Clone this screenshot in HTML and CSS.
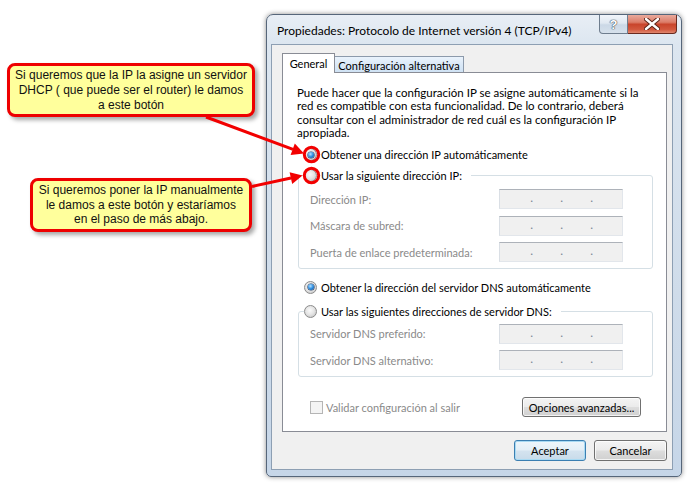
FILE: index.html
```html
<!DOCTYPE html>
<html lang="es">
<head>
<meta charset="utf-8">
<title>Propiedades: Protocolo de Internet versión 4 (TCP/IPv4)</title>
<link rel="stylesheet" href="styles.css">
</head>
<body>
<div class="desk">
  <div class="dialog">
    <div class="titlebar">
      <span class="title">Propiedades: Protocolo de Internet versión 4 (TCP/IPv4)</span>
      <div class="caps">
        <span class="cap help">?</span>
        <span class="cap close"><svg width="16" height="12" viewBox="0 0 16 12"><path d="M2 1 L14 11 M14 1 L2 11" stroke="#5a2418" stroke-width="4.4" stroke-linecap="round"/><path d="M2 1 L14 11 M14 1 L2 11" stroke="#ffffff" stroke-width="2.4" stroke-linecap="round"/></svg></span>
      </div>
    </div>
    <div class="client">
      <div class="tabs">
        <span class="tab active">General</span>
        <span class="tab">Configuración alternativa</span>
      </div>
      <div class="panel">
        <p class="intro">Puede hacer que la configuración IP se asigne automáticamente si la<br>red es compatible con esta funcionalidad. De lo contrario, deberá<br>consultar con el administrador de red cuál es la configuración IP<br>apropiada.</p>
        <label class="opt r1"><span class="rb on"></span>Obtener una dirección IP automáticamente</label>
        <fieldset class="group g1">
          <legend><span class="opt"><span class="rb"></span>Usar la siguiente dirección IP:</span></legend>
          <div class="row"><span class="lbl">Dirección IP:</span><span class="ip"><span>.</span><span>.</span><span>.</span></span></div>
          <div class="row"><span class="lbl">Máscara de subred:</span><span class="ip"><span>.</span><span>.</span><span>.</span></span></div>
          <div class="row"><span class="lbl">Puerta de enlace predeterminada:</span><span class="ip"><span>.</span><span>.</span><span>.</span></span></div>
        </fieldset>
        <label class="opt r3"><span class="rb on"></span>Obtener la dirección del servidor DNS automáticamente</label>
        <fieldset class="group g2">
          <legend><span class="opt"><span class="rb"></span>Usar las siguientes direcciones de servidor DNS:</span></legend>
          <div class="row"><span class="lbl">Servidor DNS preferido:</span><span class="ip"><span>.</span><span>.</span><span>.</span></span></div>
          <div class="row"><span class="lbl">Servidor DNS alternativo:</span><span class="ip"><span>.</span><span>.</span><span>.</span></span></div>
        </fieldset>
        <div class="foot">
          <label class="chk"><span class="box"></span>Validar configuración al salir</label>
          <span class="btn adv">Opciones avanzadas...</span>
        </div>
      </div>
      <div class="actions">
        <span class="btn default">Aceptar</span>
        <span class="btn">Cancelar</span>
      </div>
    </div>
  </div>

  <div class="callout c1">Si queremos que la IP la asigne un servidor<br>DHCP ( que puede ser el router) le damos<br>a este botón</div>
  <div class="callout c2">Si queremos poner la IP manualmente<br>le damos a este botón y estaríamos<br>en el paso de más abajo.</div>

  <svg class="marks" width="694" height="489" viewBox="0 0 694 489">
    <g fill="none" stroke="#f20000" stroke-width="3">
      <line x1="206" y1="117" x2="293" y2="149.3"/>
      <line x1="252" y1="186.5" x2="291" y2="178"/>
      <circle cx="311.5" cy="154.5" r="7.2"/>
      <circle cx="311.5" cy="175.5" r="7.2"/>
    </g>
    <g fill="#f20000">
      <polygon points="304,153.5 290.6,155 294.8,143.6"/>
      <polygon points="302.5,175.5 292.2,184 289.6,172.2"/>
    </g>
  </svg>
</div>
</body>
</html>
```

FILE: styles.css
```css
* { box-sizing: border-box; margin: 0; padding: 0; }

body {
  width: 694px;
  height: 489px;
  overflow: hidden;
  background: #ffffff;
  font-family: Lato, "Noto Sans", sans-serif;
  font-size: 12px;
  color: #000;
}

.desk {
  position: relative;
  width: 694px;
  height: 489px;
}

/* ---------- window ---------- */
.dialog {
  position: absolute;
  left: 266px;
  top: 14px;
  width: 416px;
  height: 463px;
  border: 1px solid #56667a;
  border-radius: 7px 7px 5px 5px;
  background: linear-gradient(180deg, #e8eef5 0, #dce6f0 30px, #cfdcea 60%, #c6d6e8 100%);
  box-shadow: 0 0 5px rgba(0, 0, 0, 0.45);
  padding: 0 8px 6px 4px;
  display: flex;
  flex-direction: column;
}

.titlebar {
  height: 29px;
  display: flex;
  align-items: flex-start;
  padding: 0 0 0 6px;
}

.title {
  padding-top: 8px;
  font-size: 12px;
  color: #000;
  white-space: nowrap;
}

.caps {
  margin-left: auto;
  margin-right: -4px;
  display: flex;
}

.cap {
  height: 19px;
  display: flex;
  align-items: center;
  justify-content: center;
}

.help {
  width: 29px;
  border: 1px solid #6e7d8e;
  border-top: none;
  border-radius: 0 0 0 4px;
  background: linear-gradient(180deg, #f1f5fa 0, #e0e8f1 45%, #cbd8e6 55%, #d6e1ec 100%);
  font-family: "Liberation Sans", sans-serif;
  font-weight: bold;
  font-size: 13px;
  color: #ffffff;
  text-shadow: 0 0 1px #3d4a58, 0 0 1px #3d4a58, 0 0 1px #3d4a58;
}

.close {
  width: 49px;
  border: 1px solid #6a2a1f;
  border-left: none;
  border-top: none;
  border-radius: 0 0 4px 0;
  background: linear-gradient(180deg, #e9aa9c 0, #dc7d69 40%, #c9452c 52%, #d2583e 80%, #e0876f 100%);
}

/* ---------- client area ---------- */
.client {
  flex: 1;
  border: 1px solid #8d9fb3;
  background: #f0f0f0;
  padding: 8px 5px 0 10px;
  display: flex;
  flex-direction: column;
  font-size: 11px;
}

.tabs {
  display: flex;
  align-items: flex-end;
  height: 19px;
  position: relative;
  z-index: 1;
}

.tab {
  height: 16px;
  width: 130px;
  margin-left: -1px;
  border: 1px solid #8c9aab;
  border-bottom: none;
  background: linear-gradient(180deg, #eaf3fc 0, #dbe9f7 50%, #cfe2f4 100%);
  display: flex;
  align-items: center;
  justify-content: center;
  white-space: nowrap;
  padding-top: 1px;
}

.tab.active {
  width: 53px;
  height: 20px;
  margin-left: 0;
  margin-bottom: -1px;
  border-color: #898c95;
  background: #ffffff;
  position: relative;
  z-index: 2;
  padding-top: 0;
}

.panel {
  height: 360px;
  border: 1px solid #898c95;
  background: #ffffff;
  padding: 13px 0 0 14px;
  display: flex;
  flex-direction: column;
  align-items: flex-start;
}

.intro {
  font-size: 11.5px;
  line-height: 13.4px;
  white-space: nowrap;
}

.opt {
  display: inline-flex;
  align-items: center;
  gap: 4px;
  height: 16px;
  white-space: nowrap;
}

.r1 { margin: 7px 0 0 7px; }
.r3 { margin: 10px 0 0 7px; }

.rb {
  width: 13px;
  height: 13px;
  border-radius: 50%;
  border: 1px solid #8b8b8b;
  background: radial-gradient(circle at 45% 40%, #fafafa 0, #e6e6e6 45%, #cfcfcf 75%, #eeeeee 100%);
  position: relative;
  flex: none;
}

.rb.on::after {
  content: "";
  position: absolute;
  left: 2.5px;
  top: 2.5px;
  width: 6px;
  height: 6px;
  border-radius: 50%;
  background: radial-gradient(circle at 40% 35%, #b7e2ff 0, #2d8ee0 50%, #0b3f86 100%);
  box-shadow: 0 0 0 0.6px #1e3c66;
}

.group {
  width: 355px;
  margin-left: 1px;
  border: 1px solid #d5dfe5;
  border-radius: 3px;
  padding: 0 29px 6px 11px;
  display: flex;
  flex-direction: column;
  gap: 6.5px;
  min-width: 0;
}

.g1 { margin-top: 5px; }
.g2 { margin-top: 8px; }

.group legend {
  margin-left: -6px;
  padding: 0 9px 0 0;
  height: 16px;
  margin-bottom: 5.5px;
}

.g2 legend { margin-bottom: 4.5px; }

.row {
  display: flex;
  align-items: center;
  justify-content: space-between;
  height: 20px;
  color: #8a8a8a;
  white-space: nowrap;
}

.ip {
  width: 124px;
  height: 20px;
  background: #f0f0f0;
  border: 1px solid #e2e6eb;
  border-top-color: #adb2b9;
  border-left-color: #dadfe5;
  display: flex;
  padding-left: 3px;
  color: #7a8794;
  font-size: 12px;
  line-height: 16px;
}

.ip span {
  width: 30px;
  text-align: right;
}

.foot {
  margin-top: 20px;
  width: 100%;
  padding: 0 25px 0 13px;
  display: flex;
  align-items: center;
  justify-content: space-between;
}

.chk {
  display: inline-flex;
  align-items: center;
  gap: 3px;
  color: #8a8a8a;
  white-space: nowrap;
}

.box {
  width: 13px;
  height: 13px;
  border: 1px solid #b5b5b5;
  background: #f4f4f4;
}

.btn {
  height: 21px;
  border: 1px solid #707070;
  border-radius: 3px;
  background: linear-gradient(180deg, #f4f4f4 0, #ebebeb 48%, #dddddd 52%, #d0d0d0 100%);
  box-shadow: inset 0 0 0 1px rgba(255, 255, 255, 0.75);
  display: inline-flex;
  align-items: center;
  justify-content: center;
  white-space: nowrap;
  color: #000;
}

.adv {
  width: 119px;
  height: 20px;
}

.actions {
  margin-top: 8px;
  display: flex;
  justify-content: flex-end;
  gap: 8px;
}

.actions .btn { width: 73px; }

.btn.default {
  width: 72px;
  border-color: #3c7fb1;
  box-shadow: inset 0 0 0 1px #a9daf3;
  background: linear-gradient(180deg, #eef6fb 0, #e4eff7 48%, #d4e3ef 52%, #c8dbea 100%);
}

/* ---------- annotations ---------- */
.callout {
  position: absolute;
  background: #ffff9c;
  border: 3px solid #ee0000;
  border-radius: 8px;
  box-shadow: 3px 3px 4px rgba(0, 0, 0, 0.35);
  font-family: "Liberation Sans", Arial, sans-serif;
  font-size: 12px;
  color: #111;
  text-align: center;
  display: flex;
  align-items: center;
  justify-content: center;
}

.c1 {
  left: 7px;
  top: 63px;
  width: 248px;
  height: 54px;
  line-height: 15px;
}

.c2 {
  left: 30px;
  top: 178px;
  width: 222px;
  height: 54px;
  line-height: 14.5px;
}

.marks {
  position: absolute;
  left: 0;
  top: 0;
  pointer-events: none;
}
```
